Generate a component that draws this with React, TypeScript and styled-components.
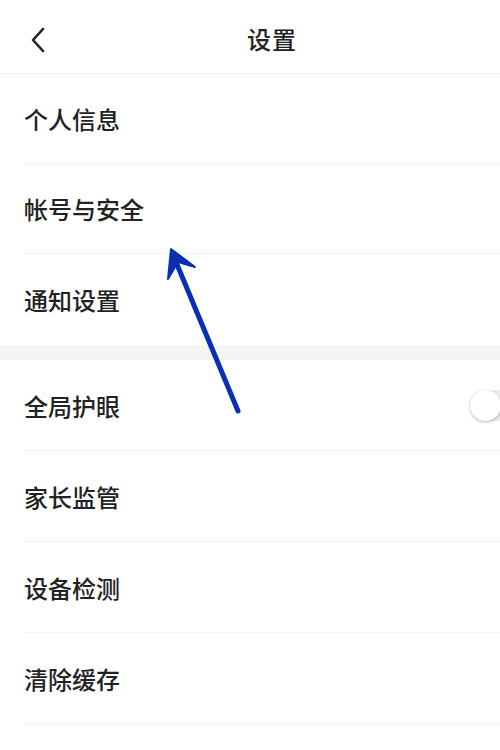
import React from "react";
import styled, { createGlobalStyle } from "styled-components";

const Global = createGlobalStyle`
  html, body { margin: 0; padding: 0; background: #fff; }
  body { font-family: "Noto Sans CJK SC", "Noto Sans", sans-serif; color: #222; overflow: hidden; }
`;

const Page = styled.div`
  position: relative;
  width: 500px;
  height: 750px;
  overflow: hidden;
  background: #fff;
`;

const Header = styled.header`
  height: 74px;
  display: flex;
  align-items: center;
  justify-content: center;
  position: relative;
  border-bottom: 1px solid #f0f0f0;
  box-sizing: border-box;
  padding-left: 44px;
  padding-top: 4px;
`;

const BackButton = styled.button`
  position: absolute;
  left: 24px;
  top: 24px;
  width: 28px;
  height: 32px;
  padding: 0;
  border: none;
  background: none;
  display: flex;
  align-items: center;
  justify-content: center;
`;

const Title = styled.h1`
  margin: 0;
  font-size: 24px;
  font-weight: 500;
  color: #222;
  letter-spacing: 1px;
`;

const Group = styled.section`
  background: #fff;
`;

const Gap = styled.div`
  height: 15px;
  background: #f5f5f5;
`;

const Row = styled.div<{ $h: number; $last?: boolean }>`
  height: ${(p) => p.$h}px;
  margin-left: 24px;
  display: flex;
  align-items: center;
  justify-content: space-between;
  box-sizing: border-box;
  border-bottom: ${(p) => (p.$last ? "none" : "1px solid #f2f2f2")};
`;

const Label = styled.span`
  font-size: 24px;
  font-weight: 500;
  color: #222;
  letter-spacing: 0;
`;

const Switch = styled.div`
  width: 56px;
  height: 31px;
  margin-right: -26px;
  border-radius: 16px;
  background: #ededed;
  position: relative;
  flex-shrink: 0;
`;

const Knob = styled.div`
  position: absolute;
  left: 0;
  top: 0;
  width: 31px;
  height: 31px;
  border-radius: 50%;
  background: #fff;
  box-shadow: 0 1px 3px rgba(0, 0, 0, 0.3);
`;

const ArrowLayer = styled.svg`
  position: absolute;
  left: 0;
  top: 0;
  pointer-events: none;
`;

const group1 = ["个人信息", "帐号与安全", "通知设置"];
const group2 = ["全局护眼", "家长监管", "设备检测", "清除缓存"];

export default function App() {
  return (
    <Page>
      <Global />
      <Header>
        <BackButton aria-label="返回">
          <svg width="16" height="26" viewBox="0 0 16 26">
            <path d="M13 2 L3 13 L13 24" fill="none" stroke="#222" strokeWidth="2.6" strokeLinecap="round" strokeLinejoin="round" />
          </svg>
        </BackButton>
        <Title>设置</Title>
      </Header>
      <Group>
        {group1.map((t, i) => (
          <Row key={t} $h={i === 2 ? 91 : 90} $last={i === group1.length - 1}>
            <Label>{t}</Label>
          </Row>
        ))}
      </Group>
      <Gap />
      <Group>
        {group2.map((t, i) => (
          <Row key={t} $h={91}>
            <Label>{t}</Label>
            {i === 0 && (
              <Switch>
                <Knob />
              </Switch>
            )}
          </Row>
        ))}
      </Group>
      <ArrowLayer width="500" height="750" viewBox="0 0 500 750">
        <line x1="238" y1="411" x2="176" y2="262" stroke="#0b2fb3" strokeWidth="5" strokeLinecap="round" />
        <path d="M171 249 L168 279 L178 262 L195 267 Z" fill="#0b2fb3" stroke="#0b2fb3" strokeWidth="2" strokeLinejoin="round" />
      </ArrowLayer>
    </Page>
  );
}
